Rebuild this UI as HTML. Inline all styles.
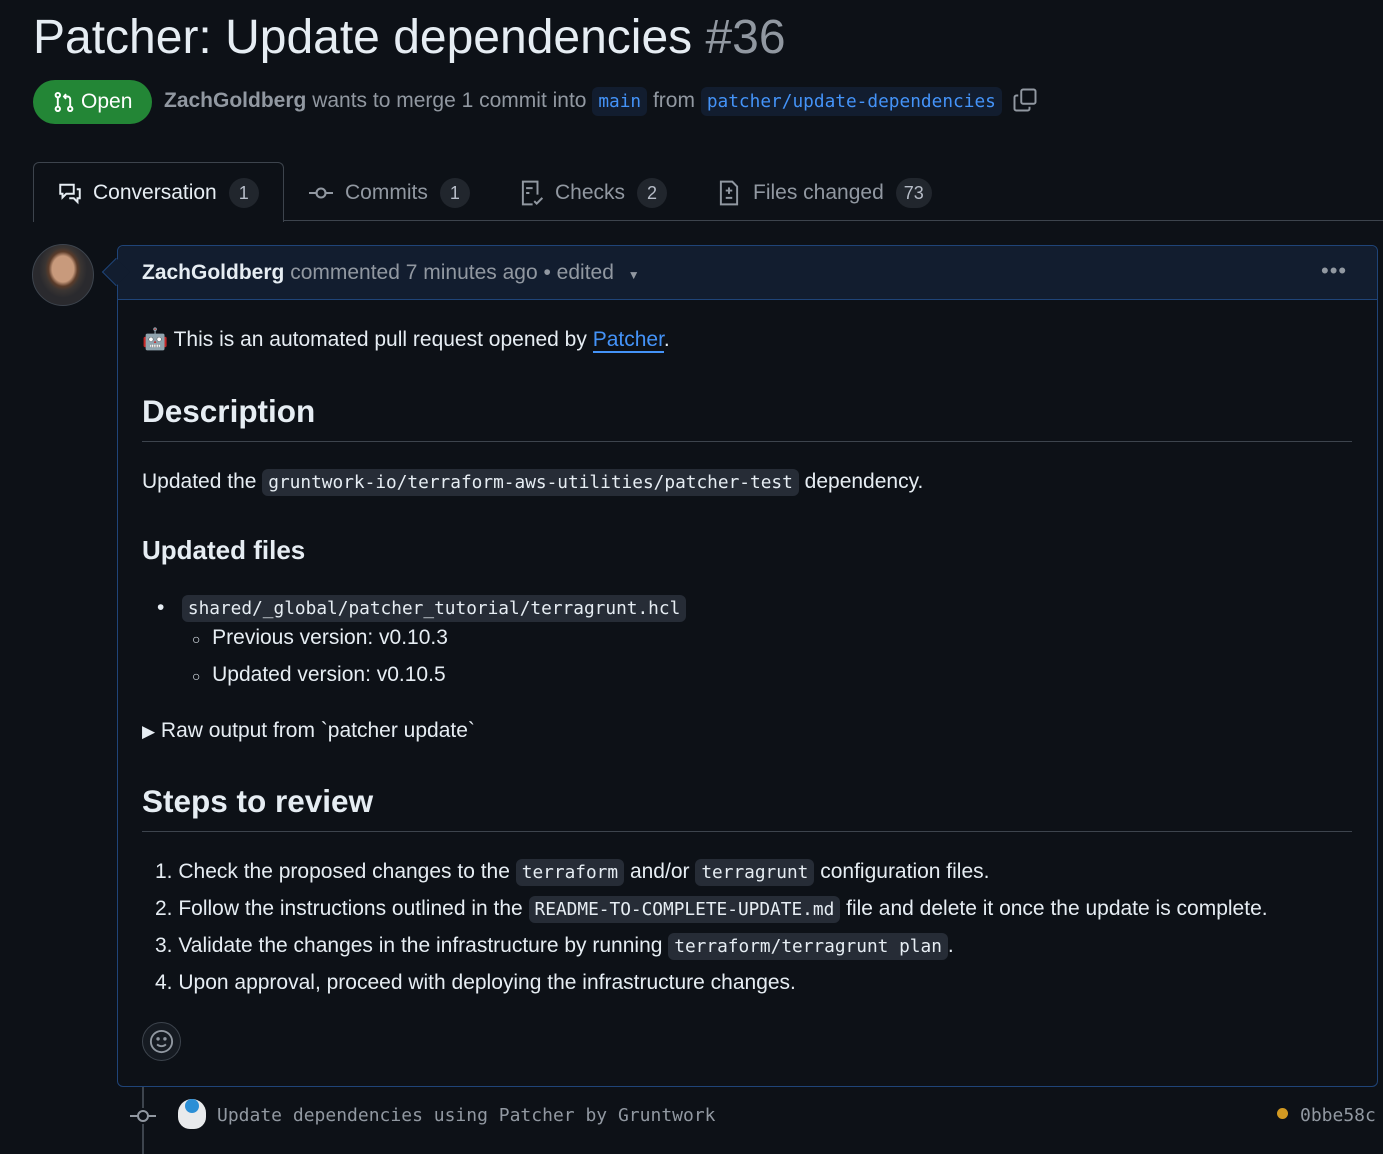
<!DOCTYPE html>
<html><head><meta charset="utf-8"><style>
*{box-sizing:border-box;margin:0;padding:0}
body{width:1383px;height:1154px;background:#0d1117;color:#e6edf3;font-family:"Liberation Sans",sans-serif;position:relative;overflow:hidden}
.a{position:absolute;white-space:nowrap}
.mono{font-family:"DejaVu Sans Mono","Liberation Mono",monospace}
code{font-family:"DejaVu Sans Mono","Liberation Mono",monospace;font-size:17.8px;background:#262c36;border-radius:6px;padding:3px 6px;color:#e6edf3}
.cnt{display:inline-block;background:#21262d;color:#b7bdc8;border-radius:15px;font-size:18px;min-width:30px;height:30px;line-height:30px;text-align:center;padding:0 8px;margin-left:12px;vertical-align:middle}
.tab{font-size:21px;color:#9198a1}
h2{font-size:31.5px;font-weight:bold}
.p{font-size:21px;color:#e6edf3}
</style></head><body>
<div class="a" style="left:33px;top:10px;font-size:48px;color:#e6edf3">Patcher: Update dependencies <span style="color:#9198a1">#36</span></div>
<div class="a" style="left:33px;top:80px;width:119px;height:44px;background:#238636;border-radius:22px;color:#fff;font-size:21px;line-height:44px;padding-left:20px">
<svg width="22" height="22" viewBox="0 0 16 16" style="position:absolute;left:20px;top:11px" fill="none" stroke="#fff" stroke-width="1.4"><circle cx="3.5" cy="3" r="1.6"/><circle cx="3.5" cy="13" r="1.6"/><circle cx="12.5" cy="13" r="1.6"/><path d="M3.5 4.6v6.8M12.5 11.4V6a2 2 0 0 0-2-2H8M9.5 2.3L8 4l1.5 1.7"/></svg>
<span style="margin-left:28px">Open</span></div>
<div class="a" style="left:164px;top:89px;font-size:21px;color:#9198a1"><b style="color:#9198a1">ZachGoldberg</b> wants to merge 1 commit into <code style="background:#121d2f;color:#4493f8;padding:4px 6px">main</code> from <code style="background:#121d2f;color:#4493f8;padding:4px 6px">patcher/update-dependencies</code></div>
<svg class="a" style="left:1013px;top:88px" width="24" height="24" viewBox="0 0 16 16" fill="none" stroke="#9198a1" stroke-width="1.3"><rect x="5.5" y="1" width="9.5" height="9.5" rx="1.2"/><path d="M3.5 5H2.2A1.2 1.2 0 0 0 1 6.2v7.6A1.2 1.2 0 0 0 2.2 15h7.6a1.2 1.2 0 0 0 1.2-1.2V12.5"/></svg>

<div class="a" style="left:33px;top:162px;width:251px;height:60px;border:1px solid #3d444d;border-bottom:none;border-radius:6px 6px 0 0;background:#0d1117;z-index:2"></div>
<div class="a" style="left:283px;top:220px;width:1100px;height:1px;background:#3d444d"></div>
<div class="a" style="left:58px;top:178px;z-index:3"><svg width="24" height="24" viewBox="0 0 16 16" fill="none" stroke="#e6edf3" stroke-width="1.3" style="vertical-align:middle"><path d="M1.5 2.5h9v6h-5l-2.5 2.5v-2.5h-1.5z"/><path d="M12.5 5.5h2v6h-1.5v2.5l-2.5-2.5h-3"/></svg><span class="tab" style="color:#e6edf3;margin-left:11px;vertical-align:middle">Conversation</span><span class="cnt">1</span></div>
<div class="a" style="left:308px;top:178px"><svg width="26" height="24" viewBox="0 0 16 16" fill="none" stroke="#9198a1" stroke-width="1.4" style="vertical-align:middle"><circle cx="8" cy="8" r="3"/><path d="M0 8h5M11 8h5"/></svg><span class="tab" style="margin-left:11px;vertical-align:middle">Commits</span><span class="cnt">1</span></div>
<div class="a" style="left:518px;top:178px"><svg width="26" height="26" viewBox="0 0 16 16" fill="none" stroke="#9198a1" stroke-width="1.2" style="vertical-align:middle"><path d="M9 15H3V1h9v8M5 5h4M5 8h2M10 13l1.5 1.5L15 11"/></svg><span class="tab" style="margin-left:11px;vertical-align:middle">Checks</span><span class="cnt">2</span></div>
<div class="a" style="left:716px;top:178px"><svg width="26" height="26" viewBox="0 0 16 16" fill="none" stroke="#9198a1" stroke-width="1.2" style="vertical-align:middle"><path d="M3 1h7l3 3v11H3z"/><path d="M8 4.5v4M6 6.5h4M6 11h4"/></svg><span class="tab" style="margin-left:11px;vertical-align:middle">Files changed</span><span class="cnt">73</span></div>

<div class="a" style="left:32px;top:244px;width:62px;height:62px;border-radius:50%;background:radial-gradient(ellipse 40% 48% at 50% 40%,#c89a7c 0 45%,#5b3c2a 60%,#3a3533 75%,#2a2a2e 100%);border:1px solid #3d444d"></div>

<div class="a" style="left:142px;top:1086px;width:2px;height:68px;background:#3d444d"></div>
<div class="a" style="left:117px;top:245px;width:1261px;height:842px;border:1px solid #1f4478;border-radius:6px;background:#0d1117"></div>
<div class="a" style="left:118px;top:246px;width:1259px;height:54px;background:#121d2f;border-bottom:1px solid #1f4478;border-radius:6px 6px 0 0"></div>
<div class="a" style="left:106px;top:262px;width:20px;height:20px;background:#121d2f;border-left:1px solid #1f4478;border-bottom:1px solid #1f4478;transform:rotate(45deg)"></div>
<div class="a" style="left:142px;top:261px;font-size:21px;color:#9198a1"><b style="color:#e6edf3">ZachGoldberg</b> commented 7 minutes ago • edited <span style="font-size:12px;margin-left:8px">▼</span></div>
<div class="a" style="left:1321px;top:258px;font-size:22px;color:#9198a1;letter-spacing:1px">•••</div>

<div class="a p" style="left:142px;top:328px">🤖 This is an automated pull request opened by <span style="color:#4493f8;border-bottom:2px solid #4493f8">Patcher</span>.</div>
<h2 class="a" style="left:142px;top:393px">Description</h2>
<div class="a" style="left:142px;top:441px;width:1210px;height:1px;background:#3d444d"></div>
<div class="a p" style="left:142px;top:470px">Updated the <code>gruntwork-io/terraform-aws-utilities/patcher-test</code> dependency.</div>
<div class="a" style="left:142px;top:535px;font-size:26px;font-weight:bold">Updated files</div>
<div class="a p" style="left:157px;top:596px">•&nbsp;&nbsp; <code>shared/_global/patcher_tutorial/terragrunt.hcl</code></div>
<div class="a p" style="left:192px;top:626px"><span style="font-size:14px">○</span>&nbsp; Previous version: v0.10.3</div>
<div class="a p" style="left:192px;top:663px"><span style="font-size:14px">○</span>&nbsp; Updated version: v0.10.5</div>
<div class="a p" style="left:142px;top:719px"><span style="font-size:17px">▶</span> Raw output from `patcher update`</div>
<h2 class="a" style="left:142px;top:783px">Steps to review</h2>
<div class="a" style="left:142px;top:831px;width:1210px;height:1px;background:#3d444d"></div>
<div class="a p" style="left:155px;top:860px">1. Check the proposed changes to the <code>terraform</code> and/or <code>terragrunt</code> configuration files.</div>
<div class="a p" style="left:155px;top:897px">2. Follow the instructions outlined in the <code>README-TO-COMPLETE-UPDATE.md</code> file and delete it once the update is complete.</div>
<div class="a p" style="left:155px;top:934px">3. Validate the changes in the infrastructure by running <code>terraform/terragrunt plan</code>.</div>
<div class="a p" style="left:155px;top:971px">4. Upon approval, proceed with deploying the infrastructure changes.</div>
<div class="a" style="left:142px;top:1022px;width:39px;height:39px;border-radius:50%;background:#161b22;border:1px solid #3d444d"></div>
<svg class="a" style="left:149px;top:1029px" width="25" height="25" viewBox="0 0 16 16" fill="none" stroke="#9198a1" stroke-width="1.2"><circle cx="8" cy="8" r="6.8"/><path d="M5.2 9.8c1.5 1.6 4.1 1.6 5.6 0"/><circle cx="5.8" cy="6.3" r=".5" fill="#9198a1"/><circle cx="10.2" cy="6.3" r=".5" fill="#9198a1"/></svg>

<div class="a" style="left:129px;top:1108px;width:28px;height:16px;background:#0d1117"></div>
<svg class="a" style="left:129px;top:1106px" width="28" height="20" viewBox="0 0 28 20" fill="none" stroke="#9198a1" stroke-width="2"><circle cx="14" cy="10" r="5"/><path d="M1 10h8M19 10h8"/></svg>
<div class="a" style="left:178px;top:1099px;width:28px;height:30px;border-radius:14px 14px 12px 12px;background:#e8eaec"></div>
<div class="a" style="left:185px;top:1099px;width:14px;height:14px;border-radius:50%;background:#2b8fd6"></div>
<div class="a mono" style="left:217px;top:1105px;font-size:18px;color:#9198a1">Update dependencies using Patcher by Gruntwork</div>
<div class="a" style="left:1277px;top:1108px;width:11px;height:11px;border-radius:50%;background:#d29922"></div>
<div class="a mono" style="left:1300px;top:1105px;font-size:18px;color:#9198a1">0bbe58c</div>
</body></html>
